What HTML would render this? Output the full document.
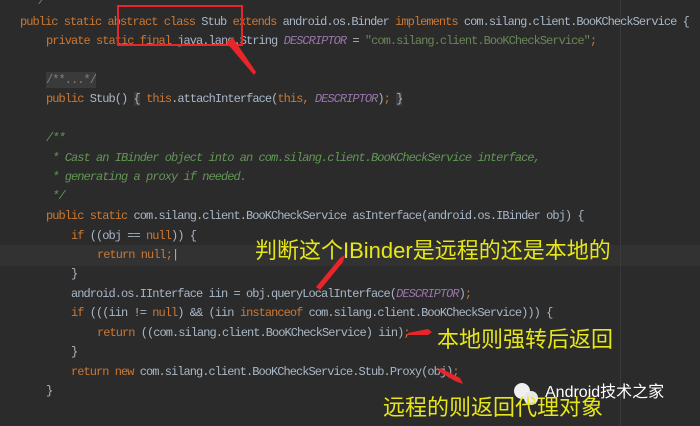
<!DOCTYPE html>
<html><head><meta charset="utf-8"><style>
body{margin:0;width:700px;height:426px;background:#2b2b2b;overflow:hidden;position:relative}
.l{position:absolute;white-space:pre;font-family:"Liberation Mono",monospace;font-size:12px;letter-spacing:-0.95px;color:#a9b7c6;line-height:16px}
.k{color:#cc7832}.c{color:#629755;font-style:italic}.g{color:#808080}.p{color:#9876aa;font-style:italic}.s{color:#6a8759}
.y{position:absolute;color:#e6e619;font-family:"Liberation Sans","Noto Sans CJK SC",sans-serif;font-size:22px;white-space:nowrap;line-height:26px}
</style></head><body>
<div style="position:absolute;left:0;top:245px;width:700px;height:21px;background:#323232"></div>
<div style="position:absolute;left:620px;top:0;width:1px;height:426px;background:#3a3a3a"></div>
<div class="l" style="left:32px;top:-7px"><span class="c">*/</span></div>
<div class="l" style="left:20px;top:14px"><span class="k">public static abstract class </span>Stub <span class="k">extends </span>android.os.Binder <span class="k">implements </span>com.silang.client.BooKCheckService {</div>
<div class="l" style="left:46px;top:33px"><span class="k">private static final </span>java.lang.String <span class="p">DESCRIPTOR</span> = <span class="s">"com.silang.client.BooKCheckService"</span><span class="k">;</span></div>
<div class="l" style="left:46px;top:72px;background:#3a3a3a"><span class="g">/**...*/</span></div>
<div class="l" style="left:46px;top:91px"><span class="k">public </span>Stub() <span style="background:#3a3a3a">{</span> <span class="k">this</span>.attachInterface(<span class="k">this, </span><span class="p">DESCRIPTOR</span>)<span class="k">;</span> <span style="background:#3a3a3a">}</span></div>
<div class="l" style="left:46px;top:130px"><span class="c">/**</span></div>
<div class="l" style="left:46px;top:150px"><span class="c"> * Cast an IBinder object into an com.silang.client.BooKCheckService interface,</span></div>
<div class="l" style="left:46px;top:169px"><span class="c"> * generating a proxy if needed.</span></div>
<div class="l" style="left:46px;top:188px"><span class="c"> */</span></div>
<div class="l" style="left:46px;top:208px"><span class="k">public static </span>com.silang.client.BooKCheckService asInterface(android.os.IBinder obj) {</div>
<div class="l" style="left:71px;top:228px"><span class="k">if </span>((obj == <span class="k">null</span>)) {</div>
<div class="l" style="left:97px;top:247px"><span class="k">return null;</span>|</div>
<div class="l" style="left:71px;top:266px">}</div>
<div class="l" style="left:71px;top:286px">android.os.IInterface iin = obj.queryLocalInterface(<span class="p">DESCRIPTOR</span>)<span class="k">;</span></div>
<div class="l" style="left:71px;top:305px"><span class="k">if </span>(((iin != <span class="k">null</span>) &amp;&amp; (iin <span class="k">instanceof </span>com.silang.client.BooKCheckService))) {</div>
<div class="l" style="left:97px;top:325px"><span class="k">return </span>((com.silang.client.BooKCheckService) iin)<span class="k">;</span></div>
<div class="l" style="left:71px;top:344px">}</div>
<div class="l" style="left:71px;top:364px"><span class="k">return new </span>com.silang.client.BooKCheckService.Stub.Proxy(obj)<span class="k">;</span></div>
<div class="l" style="left:46px;top:383px">}</div>
<div style="position:absolute;left:117px;top:5px;width:122px;height:37px;border:2px solid #e8262a"></div>
<svg style="position:absolute;left:0;top:0" width="700" height="426">
<polygon points="226,42 233,38 256,72 254,75" fill="#e8262a"/>
<polygon points="316,287 340,258 345,255 343,262 320,290" fill="#e8262a"/>
<polygon points="408,333 428,329 432,332 428,335 408,335" fill="#e8262a"/>
<polygon points="440,368 460,378 463,384 455,381 438,371" fill="#e8262a"/>
<circle cx="522" cy="391" r="8" fill="#f0f0f0"/><circle cx="531" cy="398" r="7" fill="#e8e8e8"/>
</svg>
<div class="y" style="left:255px;top:238px">判断这个IBinder是远程的还是本地的</div>
<div class="y" style="left:437px;top:327px">本地则强转后返回</div>
<div class="y" style="left:383px;top:395px">远程的则返回代理对象</div>
<div style="position:absolute;left:545px;top:383px;color:#fff;font-family:'Liberation Sans','Noto Sans CJK SC',sans-serif;font-size:16px;white-space:nowrap;line-height:20px">Android技术之家</div>
</body></html>
